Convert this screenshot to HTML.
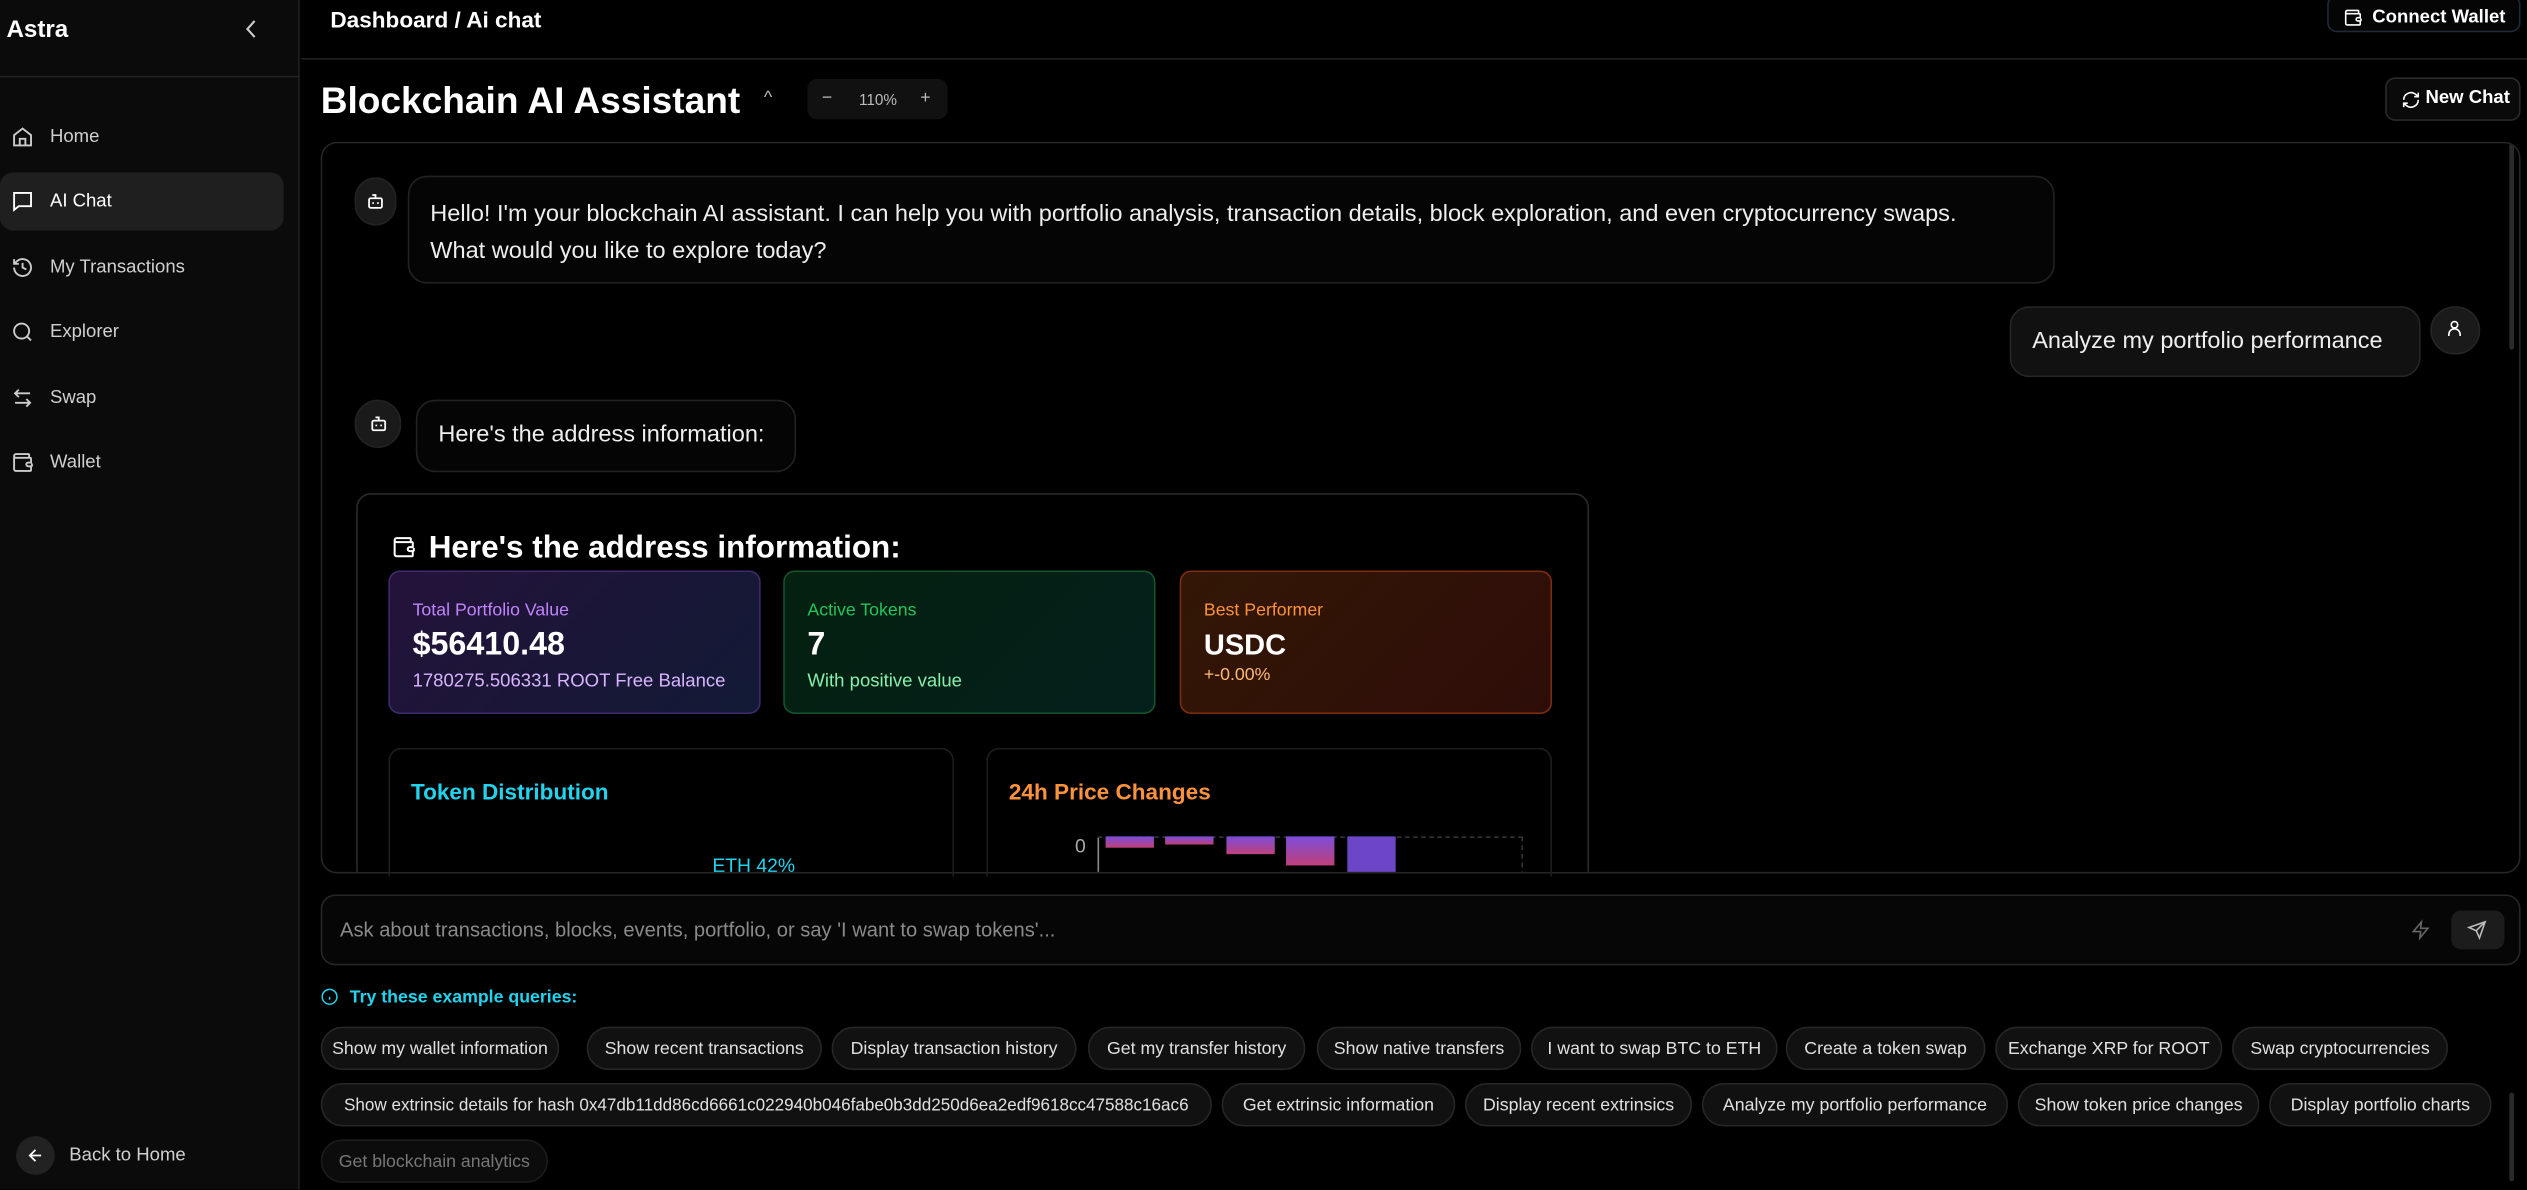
<!DOCTYPE html>
<html><head><meta charset="utf-8"><style>
*{box-sizing:border-box;margin:0;padding:0}
html,body{width:2527px;height:1190px;overflow:hidden;background:#000}
#w{position:absolute;left:0;top:0;width:1568px;height:738px;transform:scale(1.61161);transform-origin:0 0;font-family:"Liberation Sans",sans-serif;color:#fff;background:#000}
.a{position:absolute}
.sb{left:0;top:0;width:186px;height:738px;background:#0b0b0b;border-right:1px solid #1f1f1f}
.nav{position:absolute;left:0;width:176px;height:36px;display:flex;align-items:center;font-size:11.5px;color:#d0d0d0}
.nav svg{position:absolute;left:7px;width:14px;height:14px}
.nav span{position:absolute;left:31px}
.chip{position:absolute;height:27px;border:1px solid #262626;background:#111;border-radius:14px;font-size:11px;color:#e0e0e0;display:flex;align-items:center;justify-content:center;white-space:nowrap;overflow:hidden}
.st{position:absolute;top:354px;height:89px;width:231px;border-radius:7px;padding:0 14px}
.st .l{position:absolute;top:18px;left:14px;font-size:11px}
.st .v{position:absolute;top:34px;left:14px;font-size:20px;font-weight:bold}
.st .s{position:absolute;top:62px;left:14px;font-size:11.5px}
svg{overflow:visible}
</style></head><body><div id="w">
<div class="a sb">
 <div class="a" style="left:4px;top:10px;font-size:15px;font-weight:bold">Astra</div>
 <svg class="a" style="left:152px;top:12px" width="8" height="12" viewBox="0 0 8 12"><path d="M6 1L1.5 6 6 11" stroke="#ccc" stroke-width="1.3" fill="none"/></svg>
 <div class="a" style="left:0;top:47px;width:186px;height:1px;background:#222"></div>
 <div class="nav" style="top:67px"><svg viewBox="0 0 24 24" fill="none" stroke="#ccc" stroke-width="2"><path d="M3 10l9-7 9 7v11H3z"/><path d="M9 21v-7h6v7"/></svg><span>Home</span></div>
 <div class="nav" style="top:107px;background:#1f1f1f;border-radius:8px;color:#fff"><svg viewBox="0 0 24 24" fill="none" stroke="#fff" stroke-width="2"><path d="M3 3h18v14H8l-5 4z"/></svg><span>AI Chat</span></div>
 <div class="nav" style="top:148px"><svg viewBox="0 0 24 24" fill="none" stroke="#ccc" stroke-width="2"><path d="M3 12a9 9 0 1 0 3-6.7L3 8"/><path d="M3 3v5h5M12 7v5l4 2"/></svg><span>My Transactions</span></div>
 <div class="nav" style="top:188px"><svg viewBox="0 0 24 24" fill="none" stroke="#ccc" stroke-width="2"><circle cx="11" cy="11" r="8"/><path d="M21 21l-4.3-4.3"/></svg><span>Explorer</span></div>
 <div class="nav" style="top:229px"><svg viewBox="0 0 24 24" fill="none" stroke="#ccc" stroke-width="2"><path d="M8 3L4 7l4 4M4 7h16M16 21l4-4-4-4M20 17H4"/></svg><span>Swap</span></div>
 <div class="nav" style="top:269px"><svg viewBox="0 0 24 24" fill="none" stroke="#ccc" stroke-width="2"><path d="M19 7V4a1 1 0 0 0-1-1H5a2 2 0 0 0 0 4h15a1 1 0 0 1 1 1v4h-3a2 2 0 0 0 0 4h3a1 1 0 0 0 1-1v-2M3 5v14a2 2 0 0 0 2 2h15a1 1 0 0 0 1-1v-4"/></svg><span>Wallet</span></div>
 <div class="a" style="left:10px;top:705px;width:24px;height:24px;border-radius:50%;background:#222"></div>
 <svg class="a" style="left:16px;top:711px" width="12" height="12" viewBox="0 0 24 24" fill="none" stroke="#fff" stroke-width="2.2"><path d="M12 19l-7-7 7-7M19 12H5"/></svg>
 <div class="a" style="left:43px;top:711px;font-size:11.5px;color:#d0d0d0">Back to Home</div>
</div>
<div class="a" style="left:205px;top:4px;font-size:14px;font-weight:bold">Dashboard / Ai chat</div>
<div class="a" style="left:187px;top:36px;width:1381px;height:1px;background:#222"></div>
<div class="a" style="left:1444px;top:-3px;width:120px;height:23px;border:1px solid #1e2a38;border-radius:6px;background:#050505"></div>
<svg class="a" style="left:1454px;top:5px" width="12" height="12" viewBox="0 0 24 24" fill="none" stroke="#fff" stroke-width="2"><path d="M19 7V4a1 1 0 0 0-1-1H5a2 2 0 0 0 0 4h15a1 1 0 0 1 1 1v4h-3a2 2 0 0 0 0 4h3a1 1 0 0 0 1-1v-2M3 5v14a2 2 0 0 0 2 2h15a1 1 0 0 0 1-1v-4"/></svg>
<div class="a" style="left:1472px;top:5px;font-size:11.5px;font-weight:bold">Connect Wallet</div>
<div class="a" style="left:199px;top:49px;font-size:23px;font-weight:bold">Blockchain AI Assistant</div>
<div class="a" style="left:474px;top:55px;font-size:11px;color:#bbb">^</div>
<div class="a" style="left:501px;top:49px;width:87px;height:25px;background:#111;border-radius:6px"></div>
<div class="a" style="left:510px;top:55px;font-size:11px;color:#bbb">−</div>
<div class="a" style="left:533px;top:57px;font-size:9.5px;color:#bbb">110%</div>
<div class="a" style="left:571px;top:55px;font-size:11px;color:#bbb">+</div>
<div class="a" style="left:1480px;top:48px;width:84px;height:27px;border:1px solid #2a2a2a;border-radius:6px;background:#0a0a0a"></div>
<svg class="a" style="left:1490px;top:56px" width="12" height="12" viewBox="0 0 24 24" fill="none" stroke="#fff" stroke-width="2"><path d="M3 12a9 9 0 0 1 15-6.7L21 8M21 3v5h-5M21 12a9 9 0 0 1-15 6.7L3 16M3 21v-5h5"/></svg>
<div class="a" style="left:1505px;top:55px;font-size:11.5px;font-weight:bold">New Chat</div>

<div class="a" style="left:199px;top:88px;width:1365px;height:454px;border:1px solid #262626;border-radius:10px;overflow:hidden;background:#000">
 <div class="a" style="left:1357px;top:0;width:3px;height:128px;background:#2a2a2a;border-radius:2px"></div>
 <div class="a" style="left:20px;top:21px;width:26px;height:30px;border-radius:13px;background:#1a1a1a;border:1px solid #222"></div>
 <svg class="a" style="left:27px;top:30px" width="12" height="12" viewBox="0 0 24 24" fill="none" stroke="#fff" stroke-width="2.2"><path d="M12 8V4H8"/><rect x="4" y="8" width="16" height="12" rx="2"/><path d="M9 13v2M15 13v2"/></svg>
 <div class="a" style="left:53px;top:20px;width:1022px;height:67px;border:1px solid #222;border-radius:12px;background:#050505"></div>
 <div class="a" style="left:67px;top:33px;font-size:14.6px;line-height:23px;color:#eee;white-space:nowrap">Hello! I'm your blockchain AI assistant. I can help you with portfolio analysis, transaction details, block exploration, and even cryptocurrency swaps.<br>What would you like to explore today?</div>
 <div class="a" style="left:1047px;top:101px;width:255px;height:44px;border:1px solid #262626;border-radius:12px;background:#111"></div>
 <div class="a" style="left:1061px;top:115px;font-size:14.6px;color:#eee">Analyze my portfolio performance</div>
 <div class="a" style="left:1308px;top:101px;width:31px;height:30px;border-radius:15px;background:#1a1a1a;border:1px solid #262626"></div>
 <svg class="a" style="left:1317px;top:109px" width="12" height="12" viewBox="0 0 24 24" fill="none" stroke="#fff" stroke-width="2"><circle cx="12" cy="7" r="4"/><path d="M5 21v-2a7 7 0 0 1 14 0v2"/></svg>
 <div class="a" style="left:20px;top:159px;width:29px;height:30px;border-radius:15px;background:#1a1a1a;border:1px solid #222"></div>
 <svg class="a" style="left:29px;top:168px" width="12" height="12" viewBox="0 0 24 24" fill="none" stroke="#fff" stroke-width="2.2"><path d="M12 8V4H8"/><rect x="4" y="8" width="16" height="12" rx="2"/><path d="M9 13v2M15 13v2"/></svg>
 <div class="a" style="left:58px;top:159px;width:236px;height:45px;border:1px solid #222;border-radius:12px;background:#050505"></div>
 <div class="a" style="left:72px;top:173px;font-size:14.6px;color:#eee">Here's the address information:</div>

 <div class="a" style="left:21px;top:217px;width:765px;height:260px;border:1px solid #2a2a2a;border-radius:9px;background:#000">
  <svg class="a" style="left:21px;top:25px" width="15" height="15" viewBox="0 0 24 24" fill="none" stroke="#fff" stroke-width="2"><path d="M19 7V4a1 1 0 0 0-1-1H5a2 2 0 0 0 0 4h15a1 1 0 0 1 1 1v4h-3a2 2 0 0 0 0 4h3a1 1 0 0 0 1-1v-2M3 5v14a2 2 0 0 0 2 2h15a1 1 0 0 0 1-1v-4"/></svg>
  <div class="a" style="left:44px;top:22px;font-size:19.5px;font-weight:bold">Here's the address information:</div>
 </div>
</div>
<div class="st" style="left:241px;background:linear-gradient(135deg,#24123a,#111a35);border:1px solid #3f2a6b"><div class="l" style="color:#c084fc">Total Portfolio Value</div><div class="v">$56410.48</div><div class="s" style="color:#d8b4fe">1780275.506331 ROOT Free Balance</div></div>
<div class="st" style="left:486px;background:linear-gradient(135deg,#04200f,#04201c);border:1px solid #14532d"><div class="l" style="color:#22c55e">Active Tokens</div><div class="v">7</div><div class="s" style="color:#86efac">With positive value</div></div>
<div class="st" style="left:732px;background:linear-gradient(135deg,#331705,#2e0d09);border:1px solid #7c2d12"><div class="l" style="color:#fb923c">Best Performer</div><div class="v" style="font-size:18px;top:35px">USDC</div><div class="s" style="color:#fdba74;top:58px;font-size:11px">+-0.00%</div></div>
<div class="a" style="left:241px;top:464px;width:351px;height:80px;border:1px solid #1e1e1e;border-bottom:none;border-radius:8px 8px 0 0"></div>
<div class="a" style="left:255px;top:483px;font-size:14px;font-weight:bold;color:#22d3ee">Token Distribution</div>
<div class="a" style="left:612px;top:464px;width:351px;height:80px;border:1px solid #1e1e1e;border-bottom:none;border-radius:8px 8px 0 0"></div>
<div class="a" style="left:626px;top:483px;font-size:14px;font-weight:bold;color:#fb923c">24h Price Changes</div>
<div class="a" style="left:200px;top:530px;width:1362px;height:11px;overflow:hidden">
 <div class="a" style="left:242px;top:0px;font-size:12px;color:#22d3ee">ETH 42%</div>
</div>
<div class="a" style="left:200px;top:510px;width:780px;height:31px;overflow:hidden">
 <div class="a" style="left:467px;top:8px;font-size:12px;color:#aaa">0</div>
 <div class="a" style="left:481px;top:9px;width:1px;height:30px;background:#888"></div>
 <div class="a" style="left:481px;top:9px;width:264px;height:0;border-top:1px dashed #333"></div>
 <div class="a" style="left:744px;top:9px;height:30px;border-left:1px dashed #333"></div>
 <div class="a" style="left:486px;top:9px;width:30px;height:7px;background:linear-gradient(#7c4ddb,#c0407a)"></div>
 <div class="a" style="left:523px;top:9px;width:30px;height:5px;background:linear-gradient(#7c4ddb,#c0407a)"></div>
 <div class="a" style="left:561px;top:9px;width:30px;height:11px;background:linear-gradient(#7c4ddb,#c0407a)"></div>
 <div class="a" style="left:598px;top:9px;width:30px;height:18px;background:linear-gradient(#7c4ddb,#c0407a)"></div>
 <div class="a" style="left:636px;top:9px;width:30px;height:25px;background:#6d46c8"></div>
</div>

<div class="a" style="left:199px;top:555px;width:1365px;height:44px;border:1px solid #262626;border-radius:9px;background:#060606"></div>
<div class="a" style="left:211px;top:570px;font-size:12.5px;color:#8a8a8a">Ask about transactions, blocks, events, portfolio, or say 'I want to swap tokens'...</div>
<svg class="a" style="left:1496px;top:571px" width="12" height="12" viewBox="0 0 24 24" fill="none" stroke="#666" stroke-width="2"><path d="M13 2L3 14h9l-1 8 10-12h-9z"/></svg>
<div class="a" style="left:1521px;top:565px;width:33px;height:24px;border-radius:6px;background:#1c1c1c"></div>
<svg class="a" style="left:1531px;top:571px" width="12" height="12" viewBox="0 0 24 24" fill="none" stroke="#bbb" stroke-width="2"><path d="M22 2L11 13M22 2l-7 20-4-9-9-4z"/></svg>
<svg class="a" style="left:199px;top:613px" width="11" height="11" viewBox="0 0 24 24" fill="none" stroke="#22d3ee" stroke-width="2"><circle cx="12" cy="12" r="10"/><path d="M12 16v-4M12 8h0"/></svg>
<div class="a" style="left:217px;top:613px;font-size:11px;font-weight:bold;color:#22d3ee">Try these example queries:</div>

<div class="chip" style="left:199px;top:637px;width:148px">Show my wallet information</div>
<div class="chip" style="left:364px;top:637px;width:146px">Show recent transactions</div>
<div class="chip" style="left:516px;top:637px;width:152px">Display transaction history</div>
<div class="chip" style="left:675px;top:637px;width:135px">Get my transfer history</div>
<div class="chip" style="left:817px;top:637px;width:127px">Show native transfers</div>
<div class="chip" style="left:950px;top:637px;width:153px">I want to swap BTC to ETH</div>
<div class="chip" style="left:1108px;top:637px;width:124px">Create a token swap</div>
<div class="chip" style="left:1238px;top:637px;width:141px">Exchange XRP for ROOT</div>
<div class="chip" style="left:1385px;top:637px;width:134px">Swap cryptocurrencies</div>
<div class="chip" style="left:199px;top:672px;width:553px;font-size:10.6px">Show extrinsic details for hash 0x47db11dd86cd6661c022940b046fabe0b3dd250d6ea2edf9618cc47588c16ac6</div>
<div class="chip" style="left:758px;top:672px;width:145px">Get extrinsic information</div>
<div class="chip" style="left:909px;top:672px;width:141px">Display recent extrinsics</div>
<div class="chip" style="left:1056px;top:672px;width:190px">Analyze my portfolio performance</div>
<div class="chip" style="left:1252px;top:672px;width:150px">Show token price changes</div>
<div class="chip" style="left:1408px;top:672px;width:138px">Display portfolio charts</div>
<div class="chip" style="left:199px;top:707px;width:141px;color:#777;background:#0c0c0c;border-color:#1c1c1c">Get blockchain analytics</div>
<div class="a" style="left:1557px;top:678px;width:3px;height:55px;background:#2a2a2a;border-radius:2px"></div>
</div></body></html>
